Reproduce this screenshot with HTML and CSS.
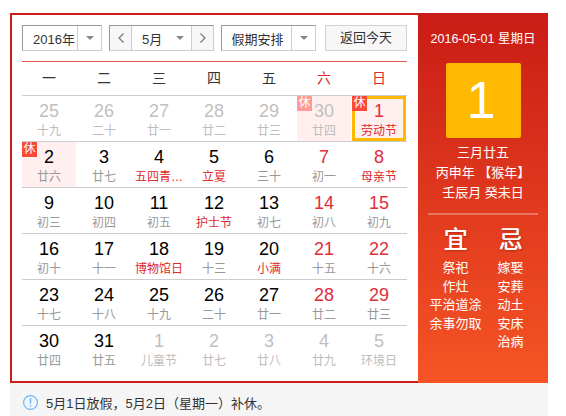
FILE: index.html
```html
<!DOCTYPE html>
<html lang="zh-CN">
<head>
<meta charset="utf-8">
<title>万年历</title>
<link rel="stylesheet" href="styles.css">
</head>
<body>
<div class="calendar">
  <div class="main">
    <div class="controls">
      <div class="ctl year"><span class="label">2016年</span><span class="arrow"><i class="tri"></i></span></div>
      <div class="ctl month">
        <span class="step prev"><svg width="8" height="12" viewBox="0 0 8 12"><path d="M6.5 1.5 2 6l4.5 4.5" fill="none" stroke="#777" stroke-width="1.2"/></svg></span>
        <span class="label">5月</span><i class="tri"></i>
        <span class="step next"><svg width="8" height="12" viewBox="0 0 8 12"><path d="M1.5 1.5 6 6l-4.5 4.5" fill="none" stroke="#777" stroke-width="1.2"/></svg></span>
      </div>
      <div class="ctl holiday"><span class="label">假期安排</span><span class="arrow"><i class="tri"></i></span></div>
      <div class="today">返回今天</div>
    </div>
    <div class="weekdays">
      <span>一</span><span>二</span><span>三</span><span>四</span><span>五</span><span class="red">六</span><span class="red">日</span>
    </div>
    <div class="row">
      <div class="cell muted"><b>25</b><small>十九</small></div>
      <div class="cell muted"><b>26</b><small>二十</small></div>
      <div class="cell muted"><b>27</b><small>廿一</small></div>
      <div class="cell muted"><b>28</b><small>廿二</small></div>
      <div class="cell muted"><b>29</b><small>廿三</small></div>
      <div class="cell muted rest"><em class="badge faded">休</em><b>30</b><small>廿四</small></div>
      <div class="cell weekend rest selected"><em class="badge">休</em><b>1</b><small class="fest">劳动节</small></div>
    </div>
    <div class="row">
      <div class="cell rest"><em class="badge">休</em><b>2</b><small>廿六</small></div>
      <div class="cell"><b>3</b><small>廿七</small></div>
      <div class="cell"><b>4</b><small class="fest">五四青…</small></div>
      <div class="cell"><b>5</b><small class="fest">立夏</small></div>
      <div class="cell"><b>6</b><small>三十</small></div>
      <div class="cell weekend"><b>7</b><small>初一</small></div>
      <div class="cell weekend"><b>8</b><small class="fest">母亲节</small></div>
    </div>
    <div class="row">
      <div class="cell"><b>9</b><small>初三</small></div>
      <div class="cell"><b>10</b><small>初四</small></div>
      <div class="cell"><b>11</b><small>初五</small></div>
      <div class="cell"><b>12</b><small class="fest">护士节</small></div>
      <div class="cell"><b>13</b><small>初七</small></div>
      <div class="cell weekend"><b>14</b><small>初八</small></div>
      <div class="cell weekend"><b>15</b><small>初九</small></div>
    </div>
    <div class="row">
      <div class="cell"><b>16</b><small>初十</small></div>
      <div class="cell"><b>17</b><small>十一</small></div>
      <div class="cell"><b>18</b><small class="fest">博物馆日</small></div>
      <div class="cell"><b>19</b><small>十三</small></div>
      <div class="cell"><b>20</b><small class="fest">小满</small></div>
      <div class="cell weekend"><b>21</b><small>十五</small></div>
      <div class="cell weekend"><b>22</b><small>十六</small></div>
    </div>
    <div class="row">
      <div class="cell"><b>23</b><small>十七</small></div>
      <div class="cell"><b>24</b><small>十八</small></div>
      <div class="cell"><b>25</b><small>十九</small></div>
      <div class="cell"><b>26</b><small>二十</small></div>
      <div class="cell"><b>27</b><small>廿一</small></div>
      <div class="cell weekend"><b>28</b><small>廿二</small></div>
      <div class="cell weekend"><b>29</b><small>廿三</small></div>
    </div>
    <div class="row">
      <div class="cell"><b>30</b><small>廿四</small></div>
      <div class="cell"><b>31</b><small>廿五</small></div>
      <div class="cell muted"><b>1</b><small>儿童节</small></div>
      <div class="cell muted"><b>2</b><small>廿七</small></div>
      <div class="cell muted"><b>3</b><small>廿八</small></div>
      <div class="cell muted"><b>4</b><small>廿九</small></div>
      <div class="cell muted"><b>5</b><small>环境日</small></div>
    </div>
  </div>
  <aside class="side">
    <div class="side-date">2016-05-01 星期日</div>
    <div class="day-box">1</div>
    <div class="lunar">
      <p>三月廿五</p>
      <p>丙申年 【猴年】</p>
      <p>壬辰月 癸未日</p>
    </div>
    <div class="almanac">
      <div class="col">
        <h3>宜</h3>
        <p>祭祀</p><p>作灶</p><p>平治道涂</p><p>余事勿取</p>
      </div>
      <div class="col">
        <h3>忌</h3>
        <p>嫁娶</p><p>安葬</p><p>动土</p><p>安床</p><p>治病</p>
      </div>
    </div>
  </aside>
</div>
<div class="notice">
  <svg class="info" width="15" height="15" viewBox="0 0 15 15"><circle cx="7.5" cy="7.5" r="6.9" fill="#f0f7fe" stroke="#6fb6f2" stroke-width="1.2"/><path d="M7.5 3.2v5.6M7.5 10v1.6" stroke="#6fb6f2" stroke-width="1.5" fill="none"/></svg>
  <span>5月1日放假，5月2日（星期一）补休。</span>
</div>
</body>
</html>
```
FILE: styles.css
```css
* { box-sizing: border-box; }
html, body { margin: 0; padding: 0; background: #fff; overflow: hidden; }
body {
  padding: 13px 0 0 10px;
  font-family: "Liberation Sans", "Noto Sans CJK SC", sans-serif;
  color: #333;
}
p, h3 { margin: 0; font-weight: normal; }

.calendar { display: flex; width: 538px; height: 370px; }

.main {
  width: 408px;
  padding: 10px 11px 0 10px;
  border: 2px solid #cb1c17;
  border-right: 0;
  background: #fff;
}

.controls { display: flex; gap: 7px; height: 26px; font-size: 13px; }
.ctl {
  display: flex;
  align-items: center;
  height: 26px;
  border: 1px solid #ccc;
  border-top-color: #999;
  border-left-color: #999;
  background: #fff;
}
.year { width: 80px; }
.month { width: 105px; }
.holiday { width: 95px; }
.year .label { width: 54px; padding-left: 10px; }
.holiday .label { width: 69px; padding-left: 2px; text-align: center; }
.arrow {
  flex: 1;
  display: flex;
  align-items: center;
  justify-content: center;
  height: 100%;
  border-left: 1px solid #ccc;
}
.tri {
  display: block;
  width: 0;
  height: 0;
  border-style: solid;
  border-width: 4px 4px 0;
  border-color: #888 transparent transparent;
}
.step {
  display: flex;
  align-items: center;
  justify-content: center;
  width: 22px;
  height: 100%;
  background: #f7f7f7;
}
.prev { border-right: 1px solid #ccc; }
.next { border-left: 1px solid #ccc; margin-left: auto; }
.month .label { margin-left: 10px; width: 34px; }
.today {
  width: 82px;
  margin-left: 2px;
  height: 26px;
  line-height: 24px;
  text-align: center;
  border: 1px solid #d2d2d2;
  background: #f7f7f7;
}

.weekdays {
  display: grid;
  grid-template-columns: repeat(7, 55px);
  height: 34px;
  margin-top: 10px;
  border-top: 1px solid #e8574e;
  font-size: 14px;
  line-height: 33px;
  text-align: center;
}
.weekdays span { margin-right: 1px; }
.weekdays .red { color: #dd2a2a; }

.row {
  display: grid;
  grid-template-columns: repeat(7, 55px);
  height: 46px;
  border-top: 1px solid #ccc;
}
.cell {
  position: relative;
  margin-right: 1px;
  height: 45px;
  padding-top: 4px;
  text-align: center;
  white-space: nowrap;
}
.cell b {
  display: block;
  font-size: 18px;
  font-weight: normal;
  line-height: 22px;
  color: #000;
}
.cell small {
  display: block;
  font-size: 12px;
  line-height: 18px;
  color: #999;
}
.cell small.fest { color: #dd2a2a; }
.cell.weekend b { color: #e02d3a; }
.cell.muted b { color: #bfbfbf; }
.cell.muted small { color: #bdbdbd; }
.cell.rest { background: #fff0ef; }
.cell.selected { border: 3px solid #ffb900; padding-top: 1px; }

.badge {
  position: absolute;
  top: 0;
  left: 0;
  width: 15px;
  height: 15px;
  font-style: normal;
  font-size: 12px;
  line-height: 15px;
  text-align: center;
  color: #fff;
  background: #fb4a36;
}
.selected .badge { top: -3px; left: -3px; }
.badge.faded { background: #ff9a94; }

.side {
  width: 130px;
  padding: 16px 10px 0;
  color: #fff;
  text-align: center;
  background: linear-gradient(180deg, #c91c16 0%, #f65425 100%);
}
.side-date { font-size: 12.5px; line-height: 20px; }
.day-box {
  width: 75px;
  height: 75px;
  margin: 14px auto 0;
  padding-right: 4px;
  border-radius: 2px;
  background: #ffb900;
  font-size: 52px;
  line-height: 75px;
}
.lunar {
  margin-top: 5px;
  padding-bottom: 10px;
  border-bottom: 2px solid rgba(255, 255, 255, 0.3);
  font-size: 13px;
  line-height: 20px;
}
.almanac { display: grid; grid-template-columns: 55px 55px; margin-top: 10px; font-size: 13px; line-height: 18.5px; }
.col h3 {
  font-size: 24px;
  line-height: 30px;
  margin-bottom: 4px;
  text-shadow: 0.4px 0 0 #fff, 1px 1px 2px rgba(120, 20, 0, 0.5);
}

.notice {
  display: flex;
  align-items: center;
  width: 538px;
  height: 33px;
  padding: 5px 0 0 13px;
  background: #f5f5f5;
  font-size: 13px;
  color: #333;
}
.info { margin-right: 8px; flex: none; }
```
